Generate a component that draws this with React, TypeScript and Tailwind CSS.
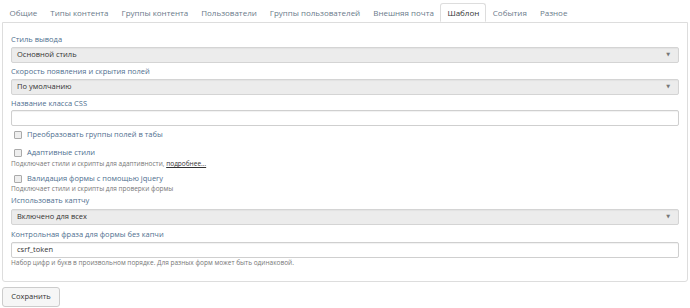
import React from 'react';

const tabs = ['Общие', 'Типы контента', 'Группы контента', 'Пользователи', 'Группы пользователей', 'Внешняя почта', 'Шаблон', 'События', 'Разное'];

const Label = ({ children, mb = 'mb-[2px]' }: { children: React.ReactNode; mb?: string }) => (
  <div className={`h-[10px] flex items-center text-[7.5px] text-[#4f6f8f] ${mb}`}>{children}</div>
);

const Select = ({ value }: { value: string }) => (
  <div className="h-[16px] bg-[#ececec] border border-[#d4d4d4] rounded-[2px] flex items-center justify-between pl-[5px] pr-[8px] shadow-[inset_0_1px_1px_rgba(0,0,0,0.04)]">
    <span className="text-[7.5px] text-[#333]">{value}</span>
    <span className="text-[5px] text-[#777]">▼</span>
  </div>
);

const Input = ({ value }: { value?: string }) => (
  <div className="h-[16px] bg-white border border-[#cfcfcf] rounded-[2px] flex items-center pl-[5px] shadow-[inset_0_1px_1px_rgba(0,0,0,0.06)]">
    <span className="text-[7.5px] text-[#333]">{value}</span>
  </div>
);

const Check = ({ label }: { label: string }) => (
  <div className="flex items-center gap-[5px] pl-[3px] h-[10px]">
    <span className="w-[8px] h-[8px] border border-[#aaa] bg-[#eee] rounded-[1px]" />
    <span className="text-[7.5px] text-[#4f6f8f]">{label}</span>
  </div>
);

const Help = ({ children }: { children: React.ReactNode }) => (
  <div className="h-[10px] flex items-center text-[6.5px] text-[#777]">{children}</div>
);

export default function App() {
  return (
    <div className="w-[690px] h-[308px] bg-white overflow-hidden" style={{ fontFamily: '"Open Sans", "DejaVu Sans", sans-serif' }}>
      <div className="px-[2px] pt-[3px]">
        <div className="flex pl-[1px] relative z-10">
          {tabs.map((t) => (
            <div
              key={t}
              className={
                t === 'Шаблон'
                  ? 'h-[19px] px-[6px] flex items-center text-[8px] text-[#333] bg-white border border-[#ddd] border-b-white rounded-t-[3px] mb-[-1px]'
                  : 'h-[19px] px-[6.5px] flex items-center text-[8px] text-[#6a7a8a]'
              }
            >
              {t}
            </div>
          ))}
        </div>
        <div className="border border-[#ddd] rounded-b-[3px] h-[260px] px-[8px] pt-[12px]">
          <Label>Стиль вывода</Label>
          <Select value="Основной стиль" />
          <div className="h-[4px]" />
          <Label>Скорость появления и скрытия полей</Label>
          <Select value="По умолчанию" />
          <div className="h-[4px]" />
          <Label mb="mb-[1px]">Название класса CSS</Label>
          <Input />
          <div className="h-[4px]" />
          <Check label="Преобразовать группы полей в табы" />
          <div className="h-[8px]" />
          <Check label="Адаптивные стили" />
          <div className="h-[1px]" />
          <Help>
            Подключает стили и скрипты для адаптивности,&nbsp;<span className="underline text-[#333]">подробнее...</span>
          </Help>
          <div className="h-[5px]" />
          <Check label="Валидация формы с помощью jquery" />
          <Help>Подключает стили и скрипты для проверки формы</Help>
          <div className="h-[2px]" />
          <Label mb="mb-[3px]">Использовать каптчу</Label>
          <Select value="Включено для всех" />
          <div className="h-[5px]" />
          <Label>Контрольная фраза для формы без капчи</Label>
          <Input value="csrf_token" />
          <Help>Набор цифр и букв в произвольном порядке. Для разных форм может быть одинаковой.</Help>
        </div>
        <div className="mt-[5px] flex">
          <button className="block h-[20px] w-[58px] border border-[#ccc] rounded-[3px] bg-[#f6f6f6] text-[7.5px] text-[#333]">Сохранить</button>
        </div>
      </div>
    </div>
  );
}
